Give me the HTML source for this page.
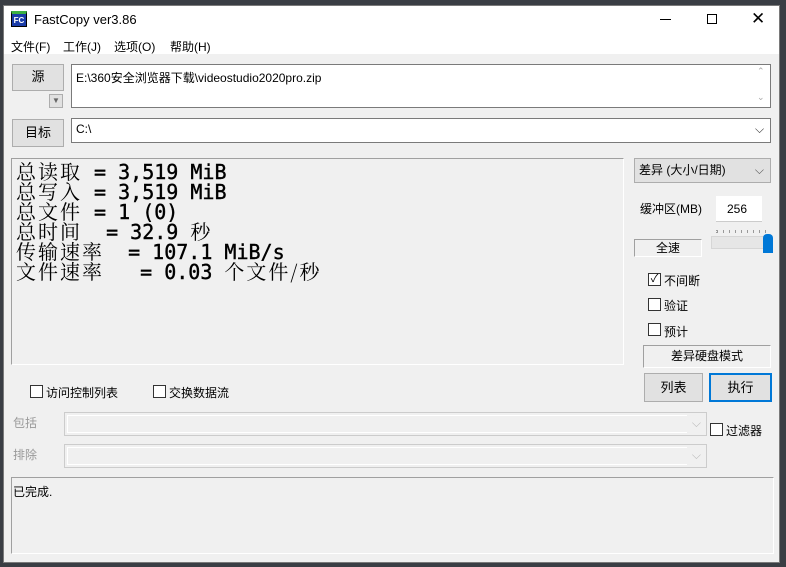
<!DOCTYPE html>
<html><head><meta charset="utf-8"><style>
*{box-sizing:border-box;margin:0;padding:0}
body{width:786px;height:567px;background:#3a3e44;position:relative;overflow:hidden;font-family:"Liberation Sans","Microsoft YaHei","Noto Sans CJK SC",sans-serif;font-size:12px;color:#000}
.a{position:absolute}
.win{left:3px;top:5px;width:777px;height:558px;background:#f0f0f0;border:1px solid #7a7a7a}
.btn{position:absolute;background:#e1e1e1;border:1px solid #adadad;text-align:center;font-size:13px}
.inp{position:absolute;background:#fff;border:1px solid #7a7a7a}
.cb{position:absolute;width:13px;height:13px;border:1px solid #333;background:#fff}
.lbl{position:absolute;font-size:12px;white-space:nowrap}
.stats{font-family:"DejaVu Sans Mono",monospace;font-size:20px;line-height:20px;font-weight:normal;-webkit-text-stroke:0.4px #000}
.stats div{white-space:pre;height:20px}
.stats span{font-family:"Noto Serif CJK SC",serif;font-weight:normal;letter-spacing:2px;-webkit-text-stroke:0;font-size:20px}
</style></head><body>
<div class="a win"></div>
<div class="a" style="left:4px;top:6px;width:775px;height:48px;background:#fff"></div>
<div class="a" style="left:11px;top:11px;width:16px;height:16px;background:#1a3ca8;border:1px solid #000;color:#fff;font-size:8px;font-weight:bold;line-height:14px;text-align:center;border-top:3px solid #3cb043">FC</div>
<div class="lbl" style="left:34px;top:12px;font-size:13px">FastCopy ver3.86</div>
<div class="a" style="left:660px;top:19px;width:11px;height:1px;background:#000"></div>
<div class="a" style="left:707px;top:14px;width:10px;height:10px;border:1px solid #000"></div>
<div class="lbl" style="left:751px;top:9px;font-size:17px;font-weight:300">✕</div>
<div class="lbl" style="left:11px;top:38px">文件(F)</div>
<div class="lbl" style="left:63px;top:38px">工作(J)</div>
<div class="lbl" style="left:114px;top:38px">选项(O)</div>
<div class="lbl" style="left:170px;top:38px">帮助(H)</div>

<div class="btn" style="left:12px;top:64px;width:52px;height:27px;line-height:24px">源</div>
<div class="btn" style="left:49px;top:94px;width:14px;height:14px;font-size:8px;line-height:12px;color:#666">▼</div>
<div class="inp" style="left:71px;top:64px;width:700px;height:44px"></div>
<div class="lbl" style="left:76px;top:69px">E:\360安全浏览器下载\videostudio2020pro.zip</div>
<div class="lbl" style="left:757px;top:66px;color:#aaa;font-size:9px">⌃</div>
<div class="lbl" style="left:757px;top:92px;color:#aaa;font-size:9px">⌄</div>

<div class="btn" style="left:12px;top:119px;width:52px;height:28px;line-height:26px">目标</div>
<div class="inp" style="left:71px;top:118px;width:700px;height:25px"></div>
<div class="lbl" style="left:76px;top:122px">C:\</div>
<div class="lbl" style="left:755px;top:122px;color:#333">⌵</div>

<div class="a" style="left:11px;top:158px;width:613px;height:207px;border:1px solid #a0a0a0;border-right-color:#fff;border-bottom-color:#fff"></div>
<div class="a stats" style="left:16px;top:161px">
<div><span>总读取</span> = 3,519 MiB</div>
<div><span>总写入</span> = 3,519 MiB</div>
<div><span>总文件</span> = 1 (0)</div>
<div><span>总时间</span>  = 32.9 <span>秒</span></div>
<div><span>传输速率</span>  = 107.1 MiB/s</div>
<div><span>文件速率</span>   = 0.03 <span>个文件/秒</span></div>
</div>

<div class="btn" style="left:634px;top:158px;width:137px;height:25px;text-align:left;padding-left:4px;line-height:23px;font-size:12px">差异 (大小/日期)<span style="position:absolute;right:6px;color:#555">⌵</span></div>
<div class="lbl" style="left:640px;top:200px">缓冲区(MB)</div>
<div class="a" style="left:716px;top:196px;width:46px;height:26px;background:#fff;border-bottom:1px solid #ccc"></div>
<div class="lbl" style="left:727px;top:202px">256</div>
<div class="a" style="left:634px;top:239px;width:68px;height:18px;border:1px solid #a0a0a0;border-right-color:#fff;border-bottom-color:#fff;text-align:center;line-height:16px">全速</div>
<div class="a" style="left:716px;top:230px;width:53px;height:3px;border-left:1px dotted #999;background:repeating-linear-gradient(90deg,#999 0 1px,transparent 1px 6px)"></div>
<div class="a" style="left:711px;top:236px;width:60px;height:13px;background:#e6e6e6;border:1px solid #d6d6d6"></div>
<div class="a" style="left:763px;top:234px;width:10px;height:19px;background:#0078d7;border-radius:4px 4px 0 0"></div>

<div class="cb" style="left:648px;top:273px;font-size:11px;line-height:11px;text-align:center">✓</div>
<div class="lbl" style="left:664px;top:272px">不间断</div>
<div class="cb" style="left:648px;top:298px"></div>
<div class="lbl" style="left:664px;top:297px">验证</div>
<div class="cb" style="left:648px;top:323px"></div>
<div class="lbl" style="left:664px;top:323px">预计</div>
<div class="a" style="left:643px;top:345px;width:128px;height:23px;border:1px solid #a0a0a0;border-right-color:#fff;border-bottom-color:#fff;text-align:center;line-height:20px">差异硬盘模式</div>
<div class="btn" style="left:644px;top:373px;width:59px;height:29px;line-height:27px">列表</div>
<div class="btn" style="left:709px;top:373px;width:63px;height:29px;line-height:25px;border:2px solid #0078d7">执行</div>

<div class="cb" style="left:30px;top:385px"></div>
<div class="lbl" style="left:46px;top:384px">访问控制列表</div>
<div class="cb" style="left:153px;top:385px"></div>
<div class="lbl" style="left:169px;top:384px">交换数据流</div>

<div class="lbl" style="left:13px;top:414px;color:#999">包括</div>
<div class="a" style="left:64px;top:412px;width:643px;height:24px;border:1px solid #ccc;background:#f0f0f0"><div class="a" style="left:2px;top:2px;width:620px;height:18px;border:1px solid #fff;border-right:none"></div><span class="a" style="right:5px;top:3px;color:#bbb">⌵</span></div>
<div class="cb" style="left:710px;top:423px"></div>
<div class="lbl" style="left:726px;top:422px">过滤器</div>
<div class="lbl" style="left:13px;top:446px;color:#999">排除</div>
<div class="a" style="left:64px;top:444px;width:643px;height:24px;border:1px solid #ccc;background:#f0f0f0"><div class="a" style="left:2px;top:2px;width:620px;height:18px;border:1px solid #fff;border-right:none"></div><span class="a" style="right:5px;top:3px;color:#bbb">⌵</span></div>

<div class="a" style="left:11px;top:477px;width:763px;height:77px;border:1px solid #a0a0a0;border-right-color:#fff;border-bottom-color:#fff"></div>
<div class="lbl" style="left:13px;top:483px">已完成.</div>
</body></html>
